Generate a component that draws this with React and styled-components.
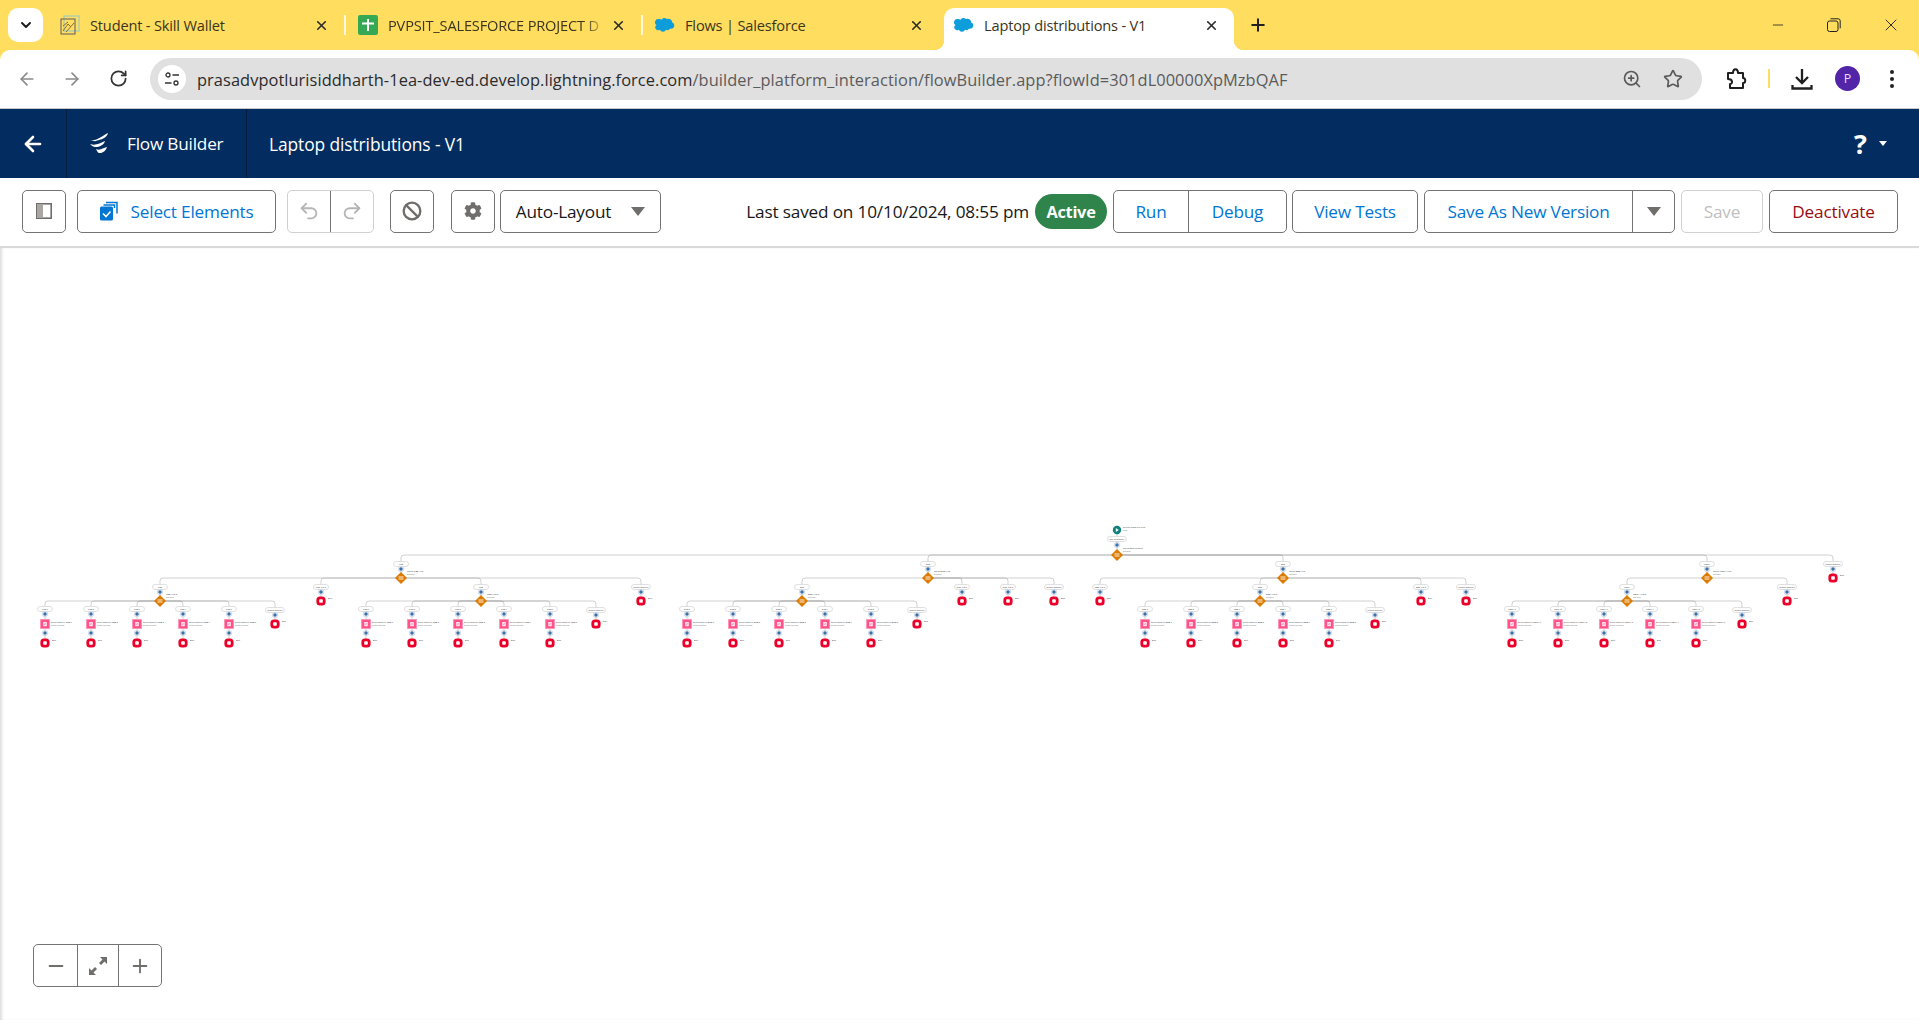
import React from 'react';
import styled, { createGlobalStyle } from 'styled-components';
import { ArrowLeft, ArrowRight, RotateCw, ZoomIn, Star, X, Plus, ChevronDown, Undo2, Redo2, Ban, Minus } from 'lucide-react';
import { FaCog } from 'react-icons/fa';

const Global = createGlobalStyle`
  html, body { margin: 0; padding: 0; height: 100%; overflow: hidden; background: #fff; }
  body { font-family: "Open Sans", "Noto Sans", sans-serif; }
  * { box-sizing: border-box; }
`;

const Page = styled.div`display:flex;flex-direction:column;width:1919px;height:1020px;overflow:hidden;`;
const Chrome = styled.header`background:#ffdd5e;flex:none;`;
const TabBar = styled.div`display:flex;align-items:flex-end;height:50px;padding-left:8px;position:relative;`;
const TabSearch = styled.button`width:35px;height:34px;margin:0 5px 8px 0;border:0;border-radius:10px;background:#fff;display:flex;align-items:center;justify-content:center;padding:0;color:#1f1f1f;`;
const Tab = styled.div`
  position:relative;display:flex;align-items:center;height:42px;flex:none;
  width:${p => p.$w}px;padding:0 15px 8px ${p => p.$pl}px;
  background:${p => p.$active ? '#fff' : 'transparent'};
  border-radius:${p => p.$active ? '10px 10px 0 0' : '0'};
  margin-left:${p => p.$ml || 0}px;
  ${p => p.$active && `
    &::before,&::after{content:"";position:absolute;bottom:0;width:10px;height:10px;}
    &::before{left:-10px;background:radial-gradient(circle at 0 0,transparent 10px,#fff 10.5px);}
    &::after{right:-10px;background:radial-gradient(circle at 100% 0,transparent 10px,#fff 10.5px);}
  `}
`;
const TabTitle = styled.span`
  flex:1;min-width:0;margin-left:10px;font-size:14.6px;color:#3b3520;white-space:nowrap;overflow:hidden;letter-spacing:-.17px;
  ${p => p.$fade && 'mask-image:linear-gradient(90deg,#000 88%,transparent 98%);'}
`;
const TabSep = styled.div`width:2px;height:20px;background:#fff8dc;margin-bottom:15px;flex:none;`;
const NewTab = styled.div`margin:0 0 15px 14px;color:#1f1f1f;display:flex;`;
const WindowControls = styled.div`position:absolute;right:0;top:0;height:50px;display:flex;align-items:center;`;
const WinBtn = styled.div`width:56.5px;display:flex;justify-content:center;color:#1f1f1f;`;

const AddrRow = styled.div`height:59px;background:#fff;border-radius:10px 10px 0 0;display:flex;align-items:center;padding:0 0 1px 0;border-bottom:1px solid #c8c8c8;`;
const NavIcon = styled.div`flex:none;display:flex;justify-content:center;width:${p => p.$w || 36}px;margin-left:${p => p.$ml || 0}px;color:${p => p.$c || '#474747'};`;
const Omnibox = styled.div`flex:none;width:1552px;height:42px;margin-left:14px;background:#e0e0e0;border-radius:21px;display:flex;align-items:center;padding:0 0 0 8px;`;
const SiteInfo = styled.div`width:28px;height:28px;border-radius:50%;background:#fff;display:flex;align-items:center;justify-content:center;flex:none;`;
const Url = styled.div`flex:1;margin-left:11px;font-size:16.4px;white-space:nowrap;color:#5b5b5b;letter-spacing:.06px;padding-top:1px;`;
const Host = styled.span`color:#2b2b2b;`;
const YellowSep = styled.div`width:2px;height:19px;background:#ffdd5e;margin-left:20px;flex:none;`;
const Avatar = styled.div`width:25px;height:25px;border-radius:50%;background:#5224a8;color:#e8dcff;font-size:12.5px;display:flex;align-items:center;justify-content:center;margin-left:21px;flex:none;`;

const NavBar = styled.div`height:69px;flex:none;background:#032d60;display:flex;align-items:center;color:#fff;`;
const NavBack = styled.div`width:67px;height:100%;display:flex;align-items:center;justify-content:center;border-right:1px solid #011d40;`;
const NavBrand = styled.div`width:180px;height:100%;display:flex;align-items:center;padding-left:22px;border-right:1px solid #011d40;font-size:17.2px;gap:18px;letter-spacing:-.2px;`;
const NavTitle = styled.div`margin-left:22px;font-size:17.4px;letter-spacing:-.1px;`;
const Help = styled.div`margin-left:auto;margin-right:32px;display:flex;align-items:center;gap:12px;font-size:27px;font-weight:700;line-height:1;`;
const HelpCaret = styled.span`width:0;height:0;border:4px solid transparent;border-top:5px solid #fff;border-bottom:0;`;

const ToolBar = styled.div`height:70px;flex:none;display:flex;align-items:center;padding:0 21px 2px 22px;border-bottom:2px solid #d9d9d9;`;
const Btn = styled.button`
  height:${p => p.$h || 43}px;flex:none;width:${p => p.$w ? p.$w + 'px' : 'auto'};margin-left:${p => p.$ml || 0}px;
  background:#fff;border:1px solid ${p => p.$dis ? '#d0d0d0' : '#747474'};border-radius:5px;padding:0;
  display:flex;align-items:center;justify-content:center;gap:${p => p.$gap || 0}px;
  font:400 17.2px "Open Sans","Noto Sans",sans-serif;letter-spacing:-.2px;
  color:${p => p.$tone === 'danger' ? '#960d13' : p.$dis ? '#c0c0c0' : p.$tone === 'dark' ? '#181818' : '#0176d3'};
`;
const Group = styled.div`display:flex;flex:none;height:${p => p.$h || 43}px;width:${p => p.$w}px;margin-left:${p => p.$ml || 0}px;border:1px solid ${p => p.$dis ? '#d0d0d0' : '#747474'};border-radius:5px;background:#fff;`;
const Seg = styled.div`
  display:flex;align-items:center;justify-content:center;flex:${p => p.$w ? 'none' : 1};width:${p => p.$w ? p.$w + 'px' : 'auto'};
  font-size:17.2px;letter-spacing:-.2px;color:${p => p.$c || '#0176d3'};
  & + & {border-left:1px solid ${p => p.$dis ? '#d0d0d0' : '#747474'};}
`;
const Caret = styled.span`width:0;height:0;border-left:7px solid transparent;border-right:7px solid transparent;border-top:9px solid #706e6b;`;
const Right = styled.div`margin-left:auto;display:flex;align-items:center;`;
const Saved = styled.div`font-size:17.2px;color:#181818;letter-spacing:-.17px;white-space:nowrap;`;
const Badge = styled.div`width:72px;height:35px;margin-left:6px;border-radius:18px;background:#2e844a;color:#fff;font-size:16.4px;font-weight:700;display:flex;align-items:center;justify-content:center;letter-spacing:-.3px;`;

const Canvas = styled.main`position:relative;flex:1;min-height:0;box-shadow:inset 3px 0 3px -1px #dedede;`;
const DiagramSvg = styled.svg`position:absolute;inset:0;display:block;`;
const ZoomBar = styled.div`position:absolute;left:33px;bottom:33px;width:129px;height:43px;display:flex;border:1px solid #747474;border-radius:5px;background:#fff;`;
const ZoomSeg = styled.div`flex:${p => p.$w ? 'none' : 1};width:${p => p.$w ? p.$w + 'px' : 'auto'};display:flex;align-items:center;justify-content:center;color:#706e6b;& + &{border-left:1px solid #747474;}`;

const cloud = 'M8.3 5.2A3.6 3.6 0 0 1 14 4.4a4.3 4.3 0 0 1 6 3.9 3.6 3.6 0 0 1-1.6 6.9c-.4 0-.8 0-1.100-.2a3.100 3.100 0 0 1-4.200 1.300 3.600 3.600 0 0 1-6.700-.2A3.100 3.100 0 0 1 2.700 11 3.500 3.500 0 0 1 4.500 4.500c1.500 0 3 .2 3.800.7z';
const Cloud = () => <svg width="20" height="20" viewBox="1 1 22 20"><path d={cloud} fill="#0d9dda" /></svg>;
const Sheets = () => <svg width="20" height="20" viewBox="0 0 20 20"><rect width="20" height="20" rx="2" fill="#34a853" /><path d="M10 4v12M4 8.500h12" stroke="#fff" strokeWidth="2" /></svg>;
const Wallet = () => <svg width="20" height="20" viewBox="0 0 20 20" fill="none"><rect x="4" y="1" width="15" height="15" stroke="#8fc7c9" /><rect x="1" y="4" width="14" height="15" stroke="#5a5a66" /><path d="M3 16l5-7 3 3M3 11l5-4M6 17l8-9" stroke="#8a6d3b" /></svg>;
const TabClose = () => <X size={15} strokeWidth={2.6} color="#2a2a2a" />;

const Sliders = () => <svg width="16" height="16" viewBox="0 0 16 16" fill="none" stroke="#333" strokeWidth="1.300"><circle cx="4" cy="4" r="2" /><path d="M8.500 4H15M1 12h6.500" /><circle cx="12" cy="12" r="2" /></svg>;
const Puzzle = () => <svg width="22" height="24" viewBox="0 0 22 24" fill="none" stroke="#1f1f1f" strokeWidth="2" strokeLinejoin="round"><path d="M3 6h5c0-5 5-5 5 0h5v5c3 0 3 5 0 5v5H5v-4c3 0 3-5-2-5z" /></svg>;
const DownloadIco = () => <svg width="24" height="24" viewBox="0 0 24 24" fill="none" stroke="#1f1f1f" strokeWidth="2.300"><path d="M12 2v13M6 10l6 6 6-6" /><path d="M2.500 18v3.500h19V18" /></svg>;
const FlowLogo = () => <svg width="20" height="26" viewBox="0 0 20 26" fill="#fff"><path d="M2 9C8 10 13 5 19 2 18 7 11 9 8 9.500 6 11 4 9.800 2 9zM1 13c6 2 10-1 15-3-1 4-6 6-9 6-2 .5-4-1-6-3zM7 18c4 2 7-1 11-2-1 4-5 6.500-8 6-1 0-2-2-3-4z" /></svg>;
const PanelIco = () => <svg width="16" height="16" viewBox="0 0 16 16"><rect x=".8" y=".8" width="14.400" height="14.400" fill="#fff" stroke="#706e6b" strokeWidth="1.600" /><rect x="1" y="1" width="6" height="14" fill="#a9a7a4" /></svg>;
const SelectIco = () => <svg width="18" height="20" viewBox="0 0 18 20" fill="none"><path d="M6 1.500h11v11M3.500 4h11v3" stroke="#0176d3" strokeWidth="1.500" /><rect y="5.500" width="13" height="14" rx="1.500" fill="#0176d3" /><path d="M3 12.500l3 3 4.500-5" stroke="#fff" strokeWidth="1.600" /></svg>;
const RestoreIco = () => <svg width="14" height="14" viewBox="0 0 14 14" fill="none" stroke="#222"><rect x=".5" y="3" width="10.500" height="10.500" rx="2" /><path d="M3.500 .8h7.700a2 2 0 0 1 2 2v7.500" /></svg>;
const ExpandIco = () => <svg width="20" height="20" viewBox="0 0 20 20" fill="#706e6b"><path d="M12 1h7v7l-2.500-2.500-3.500 3.500-2-2 3.500-3.500zM8 19H1v-7l2.500 2.500L7 11l2 2-3.500 3.500z" /></svg>;

/* ---------- flow diagram data ---------- */
const LINE = 'rgba(70,70,70,.25)';
const SVGTXT = { fontFamily: '"Liberation Sans", sans-serif' };
const Txt = ({ x, y, s = 2.2, c = '#444', anchor, children }) => (
  <text x={x} y={y} fontSize={s} fill={c} textAnchor={anchor} style={SVGTXT}>{children}</text>
);
const Wire = ({ d }) => <path d={d} fill="none" stroke={LINE} strokeWidth="1" />;
const branch = (px, py, cx, to) => {
  if (cx === px) return `M${px} ${py}V${to}`;
  const s = cx > px ? 1 : -1;
  return `M${px} ${py}H${cx - 3 * s}Q${cx} ${py} ${cx} ${py + 3}V${to}`;
};
const Pill = ({ x, y, w, label }) => (
  <g>
    <rect x={x - w / 2} y={y - 2.500} width={w} height={5} rx={2.500} fill="#fff" stroke="#d2d2d2" strokeWidth=".7" />
    <Txt x={x} y={y + .8} s={2} anchor="middle">{label}</Txt>
  </g>
);
const Add = ({ x, y }) => (
  <g>
    <circle cx={x} cy={y} r={2.800} fill="#dfe7f1" stroke="#c3cfde" strokeWidth=".6" />
    <path d={`M${x - 1.800} ${y}h3.600M${x} ${y - 1.800}v3.600`} stroke="#0b4f95" strokeWidth="1.100" />
  </g>
);
const End = ({ x, y }) => (
  <g>
    <rect x={x - 3.200} y={y - 3.200} width={6.400} height={6.400} rx={2.200} fill="#fff" stroke="#ea0029" strokeWidth="2.800" />
    <Txt x={x + 7} y={y - 2.500} s={2.200}>End</Txt>
  </g>
);
const Decision = ({ x, y, label }) => (
  <g>
    <path d={`M${x} ${y - 6}L${x + 6} ${y}L${x} ${y + 6}L${x - 6} ${y}z`} fill="#dd7a01" />
    <path d={`M${x - 2.500} ${y - 1}h5M${x - 2.500} ${y + 1}h5`} stroke="#fff" strokeWidth=".9" />
    <Txt x={x + 6} y={y - 6}>{label}</Txt>
    <Txt x={x + 6} y={y - 3.400} s={2} c="#777">Decision</Txt>
  </g>
);
const ScreenNode = ({ x, y, label }) => (
  <g>
    <rect x={x - 5} y={y - 5} width={10} height={10} fill="#ffa6c1" />
    <rect x={x - 4.200} y={y - 4.200} width={8.400} height={8.400} fill="#ff538a" />
    <path d={`M${x - 1.800} ${y - 2}h3.600v4.200h-3.600z`} fill="#ffe3ec" />
    <path d={`M${x - 1} ${y + 1}l1-1.500 1 .8`} stroke="#ff538a" strokeWidth=".5" fill="none" />
    <Txt x={x + 6} y={y - 1.500}>{label}</Txt>
    <Txt x={x + 6} y={y + 1.600} s={1.900} c="#777">Create Records</Txt>
  </g>
);
const EndLeaf = ({ px, py, x, label, w }) => (
  <g>
    <Wire d={branch(px, py, x, py + 23)} />
    <Pill x={x} y={py + 9} w={w} label={label} />
    <Add x={x} y={py + 14} />
    <End x={x} y={py + 23} />
  </g>
);
const SendLeaf = ({ px, py, x, label, title }) => (
  <g>
    <Wire d={branch(px, py, x, py + 42)} />
    <Pill x={x} y={py + 8} w={15} label={label} />
    <Add x={x} y={py + 13} />
    <ScreenNode x={x} y={py + 23} label={title} />
    <Add x={x} y={py + 32} />
    <End x={x} y={py + 42} />
  </g>
);
const SubDecision = ({ px, py, x, label, name, kids }) => (
  <g>
    {kids.map((k, i) => i < 5
      ? <SendLeaf key={i} px={x} py={py + 23} x={k} label={`${label} ${i + 1}`} title={`Send laptop to ${label} ${i + 1}`} />
      : <EndLeaf key={i} px={x} py={py + 23} x={k} label="Default Outcome" w={19} />)}
    <Wire d={branch(px, py, x, py + 23)} />
    <Pill x={x} y={py + 9} w={15} label={label} />
    <Add x={x} y={py + 14} />
    <Decision x={x} y={py + 23} label={name} />
  </g>
);
const six = x0 => [0, 1, 2, 3, 4, 5].map(i => x0 + i * 46);
const MAIN = [
  { x: 401, label: 'CSE', sub: { x: 160, kids: six(45), name: 'CSE Year 2' }, sub2: { x: 481, kids: six(366), name: 'CSE Year 3' }, ends: [321, 641] },
  { x: 928, label: 'ECE', sub: { x: 802, kids: six(687), name: 'ECE Year 2' }, ends: [962, 1008, 1054] },
  { x: 1283, label: 'EEE', sub: { x: 1260, kids: six(1145), name: 'EEE Year 2' }, ends: [1100, 1421, 1466] },
  { x: 1707, label: 'MECH', sub: { x: 1627, kids: six(1512), name: 'MECH Year 2' }, ends: [1787] },
];
const Diagram = () => (
  <DiagramSvg width="1919" height="772" viewBox="0 248 1919 772" role="img" aria-label="Flow diagram">
    <Wire d="M1117 530V555" />
    {MAIN.map(m => <Wire key={m.x} d={branch(1117, 555, m.x, 578)} />)}
    <EndLeaf px={1117} py={555} x={1833} label="Default Outcome" w={19} />
    {MAIN.map(m => (
      <g key={m.x}>
        {m.ends.map((e, i) => <EndLeaf key={e} px={m.x} py={578} x={e} label={i === m.ends.length - 1 ? 'Default Outcome' : `${m.label} Year ${i + 1}`} w={i === m.ends.length - 1 ? 19 : 15} />)}
        <SubDecision px={m.x} py={578} x={m.sub.x} label={m.label} name={m.sub.name} kids={m.sub.kids} />
        {m.sub2 && <SubDecision px={m.x} py={578} x={m.sub2.x} label={m.label} name={m.sub2.name} kids={m.sub2.kids} />}
        <Pill x={m.x} y={564} w={15} label={m.label} />
        <Add x={m.x} y={569} />
        <Decision x={m.x} y={578} label={`Check ${m.label} Year`} />
      </g>
    ))}
    <circle cx="1117" cy="530" r="4.200" fill="#0b827c" />
    <path d="M1115.800 528v4l3-2z" fill="#fff" />
    <Txt x={1123} y={527.500}>Record-Triggered Flow</Txt>
    <Txt x={1123} y={530.500} s={2} c="#777">Start</Txt>
    <Pill x={1117} y={539} w={19} label="Run Immediately" />
    <Add x={1117} y={545} />
    <Decision x={1117} y={555} label="Check Student Dept" />
  </DiagramSvg>
);

export default function App() {
  return (
    <Page>
      <Global />
      <Chrome>
        <TabBar>
          <TabSearch><ChevronDown size={16} strokeWidth={3} /></TabSearch>
          <Tab $w={296} $pl={12}><Wallet /><TabTitle>Student - Skill Wallet</TabTitle><TabClose /></Tab>
          <TabSep />
          <Tab $w={295} $pl={12}><Sheets /><TabTitle $fade>PVPSIT_SALESFORCE PROJECT D</TabTitle><TabClose /></Tab>
          <TabSep />
          <Tab $w={296} $pl={12}><Cloud /><TabTitle>Flows | Salesforce</TabTitle><TabClose /></Tab>
          <Tab $active $w={290} $pl={10} $ml={5}><Cloud /><TabTitle>Laptop distributions - V1</TabTitle><TabClose /></Tab>
          <NewTab><Plus size={20} strokeWidth={2.4} /></NewTab>
          <WindowControls>
            <WinBtn><Minus size={16} strokeWidth={1.200} /></WinBtn>
            <WinBtn><RestoreIco /></WinBtn>
            <WinBtn><X size={20} strokeWidth={1.100} /></WinBtn>
          </WindowControls>
        </TabBar>
        <AddrRow>
          <NavIcon $ml={9} $c="#8a8a8a"><ArrowLeft size={20} /></NavIcon>
          <NavIcon $ml={9} $c="#8a8a8a"><ArrowRight size={20} /></NavIcon>
          <NavIcon $ml={10} $c="#333"><RotateCw size={19} strokeWidth={2.200} /></NavIcon>
          <Omnibox>
            <SiteInfo><Sliders /></SiteInfo>
            <Url><Host>prasadvpotlurisiddharth-1ea-dev-ed.develop.lightning.force.com</Host>/builder_platform_interaction/flowBuilder.app?flowId=301dL00000XpMzbQAF</Url>
            <NavIcon $w={24} $c="#5a5a5a"><ZoomIn size={20} /></NavIcon>
            <NavIcon $w={24} $ml={17} $c="#5a5a5a"><Star size={20} /></NavIcon>
            <NavIcon $w={17} />
          </Omnibox>
          <NavIcon $w={24} $ml={22}><Puzzle /></NavIcon>
          <YellowSep />
          <NavIcon $w={24} $ml={20}><DownloadIco /></NavIcon>
          <Avatar>P</Avatar>
          <NavIcon $w={20} $ml={22} $c="#222"><svg width="6" height="20" viewBox="0 0 6 20" fill="currentColor"><circle cx="3" cy="3" r="2" /><circle cx="3" cy="10" r="2" /><circle cx="3" cy="17" r="2" /></svg></NavIcon>
        </AddrRow>
      </Chrome>
      <NavBar>
        <NavBack><ArrowLeft size={24} strokeWidth={2.600} /></NavBack>
        <NavBrand><FlowLogo />Flow Builder</NavBrand>
        <NavTitle>Laptop distributions - V1</NavTitle>
        <Help>?<HelpCaret /></Help>
      </NavBar>
      <ToolBar>
        <Btn $w={44}><PanelIco /></Btn>
        <Btn $w={199} $ml={11} $gap={13}><SelectIco />Select Elements</Btn>
        <Group $w={87} $ml={11} $dis>
          <Seg $dis $c="#b5b5b5"><Undo2 size={22} /></Seg>
          <Seg $dis $c="#b5b5b5"><Redo2 size={22} /></Seg>
        </Group>
        <Btn $w={44} $ml={16} $tone="dark"><Ban size={20} color="#706e6b" strokeWidth={2.800} /></Btn>
        <Btn $w={44} $ml={17} $tone="dark"><FaCog size={18} color="#706e6b" /></Btn>
        <Btn $w={161} $ml={5} $gap={20} $tone="dark">Auto-Layout<Caret /></Btn>
        <Right>
          <Saved>Last saved on 10/10/2024, 08:55 pm</Saved>
          <Badge>Active</Badge>
          <Group $w={174} $ml={6}>
            <Seg $w={74}>Run</Seg>
            <Seg>Debug</Seg>
          </Group>
          <Btn $w={126} $ml={5}>View Tests</Btn>
          <Group $w={251} $ml={6}>
            <Seg>Save As New Version</Seg>
            <Seg $w={42}><Caret /></Seg>
          </Group>
          <Btn $w={82} $ml={6} $dis>Save</Btn>
          <Btn $w={129} $ml={6} $tone="danger">Deactivate</Btn>
        </Right>
      </ToolBar>
      <Canvas>
        <Diagram />
        <ZoomBar>
          <ZoomSeg $w={43}><Minus size={22} strokeWidth={2} /></ZoomSeg>
          <ZoomSeg><ExpandIco /></ZoomSeg>
          <ZoomSeg $w={43}><Plus size={22} strokeWidth={2} /></ZoomSeg>
        </ZoomBar>
      </Canvas>
    </Page>
  );
}
